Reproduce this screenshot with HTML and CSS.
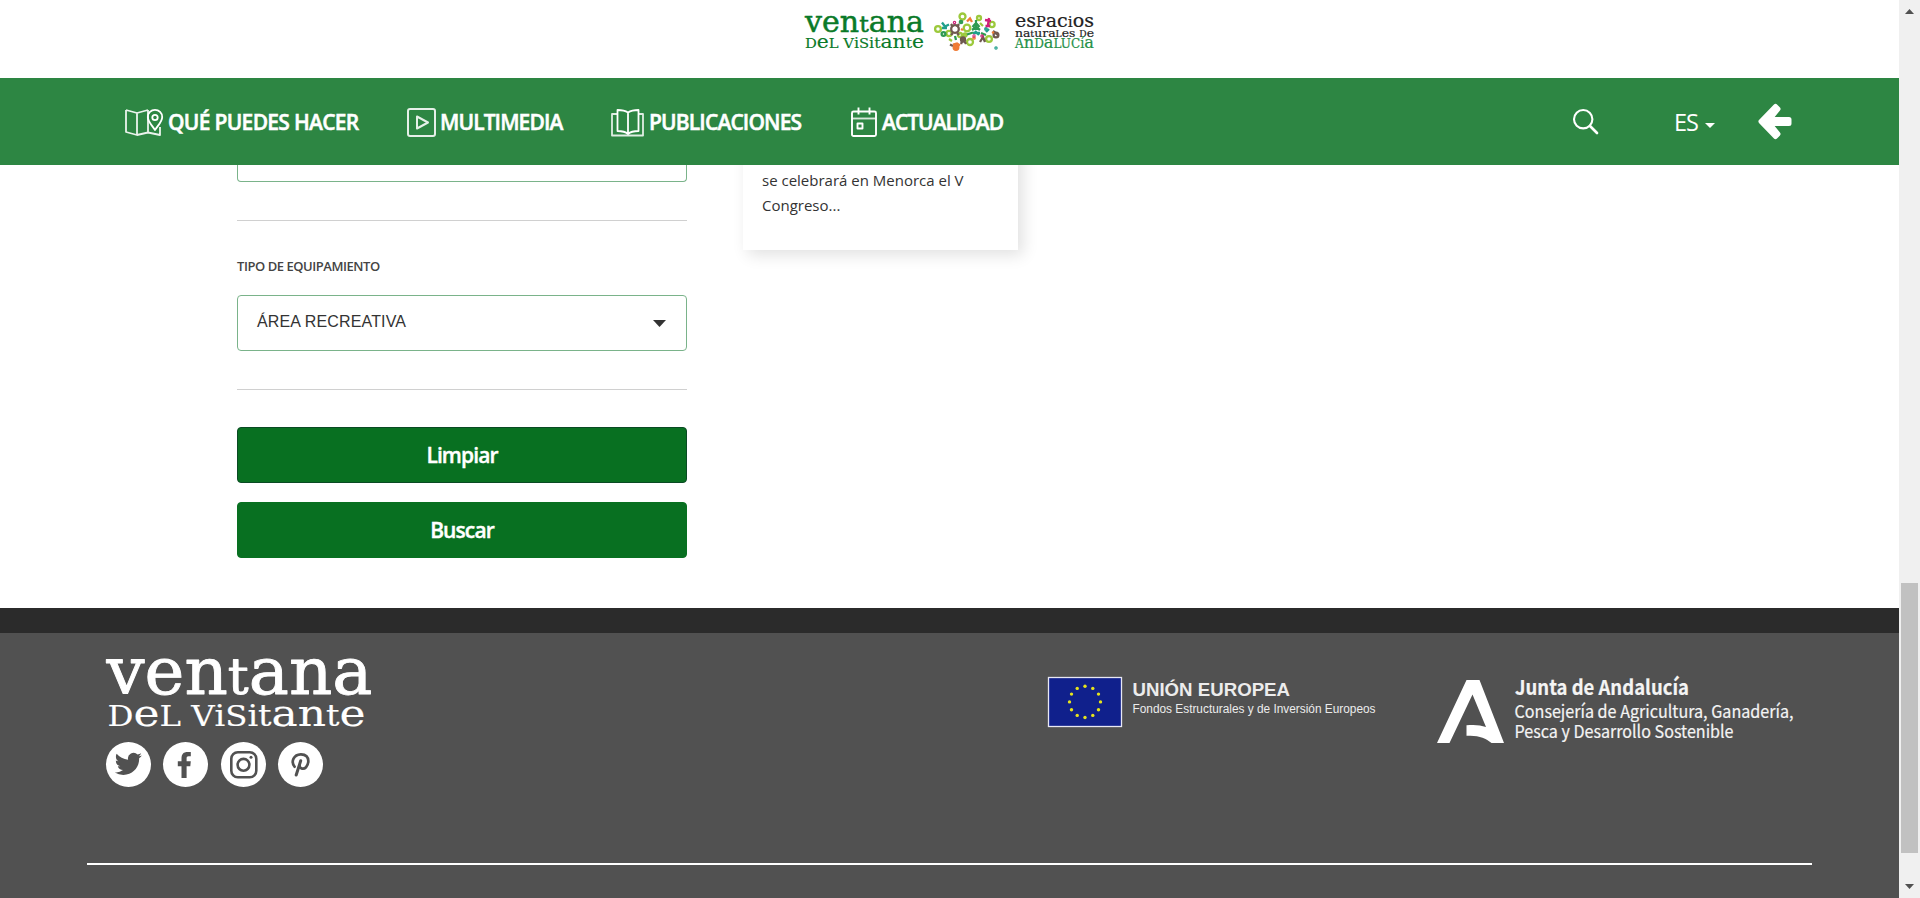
FILE: index.html
```html
<!DOCTYPE html>
<html lang="es">
<head>
<meta charset="utf-8">
<title>Ventana del Visitante</title>
<link rel="stylesheet" href="styles.css">
</head>
<body>
<div class="page">
  <header class="brand">
    <svg class="brand-logo" width="296" height="60" viewBox="800 0 296 60">
      <g class="slab green">
        <text x="805" y="32.3" font-size="29" textLength="119" lengthAdjust="spacingAndGlyphs">ven<tspan font-size="23">t</tspan>ana</text>
        <text class="thin" x="805" y="48" font-size="18.5" textLength="119" lengthAdjust="spacingAndGlyphs"><tspan font-size="13.500">D</tspan>e<tspan font-size="13.500">L V</tspan><tspan font-size="14.500">i</tspan><tspan font-size="13.500">S</tspan><tspan font-size="14.500">it</tspan>an<tspan font-size="14.500">t</tspan>e</text>
      </g>
      <g class="slab black">
        <text x="1015" y="27.3" font-size="18.500" textLength="79" lengthAdjust="spacingAndGlyphs">es<tspan font-size="14">P</tspan>ac<tspan font-size="15">i</tspan>os</text>
        <text x="1015" y="36.6" font-size="11.500" textLength="79" lengthAdjust="spacingAndGlyphs">na<tspan font-size="9">t</tspan>ura<tspan font-size="8.500">L</tspan>es <tspan font-size="8.500">D</tspan>e</text>
      </g>
      <g class="slab leaf">
        <text x="1015" y="48" font-size="13" textLength="79" lengthAdjust="spacingAndGlyphs">A<tspan font-size="17.500">n</tspan>D<tspan font-size="17.500">a</tspan>LUC<tspan font-size="14">í</tspan><tspan font-size="17.500">a</tspan></text>
      </g>
      <g fill="none" stroke-width="2.300" transform="translate(1 0)">
        <g stroke="#9cc93c">
          <circle cx="937" cy="29" r="2.900"/><circle cx="961.500" cy="16.500" r="3"/><circle cx="948" cy="33.500" r="2.600"/><circle cx="966" cy="28" r="3.300"/><circle cx="969" cy="42" r="3"/><circle cx="978" cy="18" r="2"/><circle cx="991" cy="24.500" r="2.600"/><circle cx="988" cy="39" r="2.900"/><circle cx="959" cy="35" r="2"/><circle cx="964" cy="35" r="1.500"/><path d="M948 39l3 2M979 23l3 3"/>
        </g>
        <g stroke="#2f9a52">
          <circle cx="942.500" cy="34" r="1.900"/><path d="M975 20v10M971.500 27l3.500-4 3.500 4M971 30l4-3 4 3"/><path d="M954 36l1 4M966 34.500l6-2M980 33l5 2"/><circle cx="960" cy="22" r="1.200"/>
        </g>
        <g stroke="#6f594f">
          <circle cx="954" cy="29" r="3.800"/><path d="M950 24l2 3M958 24l-2 3M950 35l2-2M958 35l-2-2M960 44l2-5 3 5M979 42l3-5 2 5"/><circle cx="962" cy="39.500" r="2"/><circle cx="995" cy="35" r="2.400"/><path d="M949 44.500l3 1.500M992 31l5 4"/>
        </g>
        <g stroke="#20a08c">
          <path d="M941 22.500l3 4 4-2M941 28h5M972 33h7M974 31l4 4M985 32l3-3"/><circle cx="985" cy="29" r=".8"/><circle cx="995" cy="48" r=".6"/>
        </g>
        <g stroke="#f07b35">
          <path d="M966 21.500l3-3 2 3.500M952 44.500l4-1 3 2M960 29l2 1M991 33l2-1"/><circle cx="955" cy="47.500" r="2.300" fill="#f07b35"/><circle cx="973" cy="38" r=".7"/>
        </g>
        <g stroke="#cf1f79">
          <path d="M984 20l6 1M988 18l-1 7M984.500 26h4.500"/><circle cx="953.500" cy="22.500" r=".6"/><circle cx="981" cy="36" r=".6"/><circle cx="973" cy="36" r=".5"/>
        </g>
      </g>
    </svg>
  </header>

  <nav class="bar">
    <a class="item item-do">
      <svg class="icon" width="43" height="32" viewBox="0 0 43 32" fill="none" stroke="#fff" stroke-width="1.800" stroke-linejoin="round">
        <path d="M1 4l11 3 11-3M1 4v22l11 3 11-2.500 12 2.500V21M12 7v22M23 4v22.500" opacity=".9"/>
        <path d="M30 24c-4-6-7.200-8.500-7.200-13a7.200 7.200 0 0 1 14.400 0c0 4.500-3.200 7-7.200 13z"/><circle cx="30" cy="11.500" r="2.700"/>
      </svg><span>QUÉ PUEDES HACER</span></a>
    <a class="item item-media">
      <svg class="icon" width="33" height="32" viewBox="0 0 33 32" fill="none" stroke="#fff" stroke-width="2" stroke-linejoin="round" opacity=".88">
        <rect x="1" y="3" width="27" height="27" rx="2"/><path d="M10 10.500l11 6-11 6z"/>
      </svg><span>MULTIMEDIA</span></a>
    <a class="item item-pub">
      <svg class="icon" width="38" height="32" viewBox="0 0 38 32" fill="none" stroke="#fff" stroke-width="1.800" stroke-linejoin="round">
        <path d="M17 6.500C14 4.500 10 4 6.500 4v21c4 0 8 .8 10.500 3 2.500-2.200 6.500-3 10.500-3V4C24 4 20 4.500 17 6.500zM17 6.500V28"/><path d="M6 8H1v21.500h31V8h-5" opacity=".85"/>
      </svg><span>PUBLICACIONES</span></a>
    <a class="item item-news">
      <svg class="icon" width="29" height="32" viewBox="0 0 29 32" fill="none" stroke="#fff" stroke-width="1.900" stroke-linejoin="round">
        <rect x="1" y="5.500" width="24" height="24.500" rx="1.500"/><path d="M1 12.500h24" opacity=".8"/><path d="M7.500 1.500v7M18.500 1.500v7"/><rect x="6.500" y="17.500" width="5" height="5"/>
      </svg><span>ACTUALIDAD</span></a>
    <div class="tools">
      <svg class="search" width="26" height="26" viewBox="0 0 26 26" fill="none" stroke="#fff"><circle cx="10.200" cy="10.200" r="9.200" stroke-width="2.100"/><path d="M17 17l7 7" stroke-width="2.700" stroke-linecap="round"/></svg>
      <span class="lang">ES</span>
      <svg class="lang-caret" width="10" height="5" viewBox="0 0 10 5"><path d="M0 0h10L5 5z" fill="#fff"/></svg>
      <svg class="back" width="35" height="37" viewBox="0 0 35 37" fill="#fff" stroke="#fff" stroke-linejoin="round"><path d="M17.500 3.500L3 18.500l14.500 15 2.500-2.500-8.500-10.500h19.500v-4H11.500L20 6z" stroke-width="5"/></svg>
    </div>
  </nav>

  <main class="content">
    <form class="filters">
      <div class="select-end"></div>
      <div class="rule"></div>
      <label class="label">TIPO DE EQUIPAMIENTO</label>
      <div class="select"><span>ÁREA RECREATIVA</span>
        <svg width="13" height="7" viewBox="0 0 13 7"><path d="M0 0h13L6.500 7z" fill="#333"/></svg></div>
      <div class="rule rule-low"></div>
      <button type="button" class="btn btn-clear">Limpiar</button>
      <button type="button" class="btn">Buscar</button>
    </form>
    <article class="card"><p>se celebrará en Menorca el V<br>Congreso...</p></article>
  </main>

  <footer class="footer">
    <div class="footer-row">
      <div class="about">
        <svg class="footer-logo" width="272" height="82" viewBox="104 650 272 82">
          <g class="slab white">
            <text x="106.500" y="694.300" font-size="66" textLength="266" lengthAdjust="spacingAndGlyphs">ven<tspan font-size="51">t</tspan>ana</text>
            <text class="thin" x="107.500" y="725.500" font-size="38" textLength="258" lengthAdjust="spacingAndGlyphs"><tspan font-size="28">D</tspan>e<tspan font-size="28">L V</tspan><tspan font-size="29">i</tspan><tspan font-size="28">S</tspan><tspan font-size="29">it</tspan>an<tspan font-size="29">t</tspan>e</text>
          </g>
        </svg>
        <div class="social">
          <svg width="45" height="45" viewBox="0 0 45 45"><circle cx="22.500" cy="22.500" r="22.500" fill="#fff"/><path transform="translate(8.800 8.300) scale(1.130)" fill="#515151" d="M23.950 4.570a10 10 0 0 1-2.820.770 4.960 4.960 0 0 0 2.160-2.720c-.95.550-2 .950-3.130 1.180a4.920 4.920 0 0 0-8.380 4.480C7.690 8.090 4.070 6.130 1.640 3.160a4.820 4.820 0 0 0-.67 2.480c0 1.710.87 3.210 2.190 4.100a4.900 4.900 0 0 1-2.230-.62v.06a4.920 4.920 0 0 0 3.950 4.830 5 5 0 0 1-2.210.08 4.940 4.940 0 0 0 4.600 3.420A9.870 9.870 0 0 1 0 19.540a14 14 0 0 0 7.560 2.210c9.050 0 14-7.500 14-13.980 0-.21 0-.42-.02-.63a9.940 9.940 0 0 0 2.410-2.570z"/></svg>
          <svg width="45" height="45" viewBox="0 0 45 45"><circle cx="22.500" cy="22.500" r="22.500" fill="#fff"/><path fill="#515151" d="M18.500 36V24.200h-3.700v-5h3.700v-2.700c0-4.500 2.200-6.500 6-6.500h3.300v4.300h-2.200c-1.700 0-2 .8-2 2.100v2.800h4.200l-.5 5h-3.700V36z"/></svg>
          <svg class="insta" width="45" height="45" viewBox="0 0 45 45"><circle cx="22.500" cy="22.500" r="22.500" fill="#fff"/><g fill="none" stroke="#515151" stroke-width="2.600"><rect x="10.300" y="10.300" width="25" height="25" rx="6.500"/><circle cx="22.500" cy="22.800" r="5.900"/></g><circle cx="30" cy="15.300" r="1.500" fill="#515151"/></svg>
          <svg width="45" height="45" viewBox="0 0 45 45"><circle cx="22.500" cy="22.500" r="22.500" fill="#fff"/><g fill="none" stroke="#515151" stroke-width="2.700" stroke-linecap="round" stroke-linejoin="round"><path d="M16.600 24.800c-4.200-5.500-.7-12.300 6.200-12.500 5-.1 7.800 3 7.500 7.300-.4 5-3.600 7.700-6.200 7-2.200-.5-2.700-1.800-2.500-3.200"/><path d="M22.700 18.800l-4.500 14.200" stroke-width="3"/></g></svg>
        </div>
      </div>
      <svg class="eu" width="336" height="60" viewBox="1046 672 336 60">
        <rect x="1048.500" y="677.500" width="73" height="49" fill="#10208c" stroke="#e8e8f4" stroke-width="1.300"/>
        <g fill="#e6e41c">
          <circle cx="1085" cy="686.300" r="1.700"/><circle cx="1092.800" cy="688.400" r="1.700"/><circle cx="1098.500" cy="694.100" r="1.700"/><circle cx="1100.500" cy="701.900" r="1.700"/><circle cx="1098.500" cy="709.700" r="1.700"/><circle cx="1092.800" cy="715.400" r="1.700"/><circle cx="1085" cy="717.500" r="1.700"/><circle cx="1077.200" cy="715.400" r="1.700"/><circle cx="1071.500" cy="709.700" r="1.700"/><circle cx="1069.500" cy="701.900" r="1.700"/><circle cx="1071.500" cy="694.100" r="1.700"/><circle cx="1077.200" cy="688.400" r="1.700"/>
        </g>
        <g class="sans">
          <text x="1132.500" y="696.300" font-size="19" font-weight="700" textLength="157.500" lengthAdjust="spacingAndGlyphs">UNIÓN EUROPEA</text>
          <text x="1132.500" y="712.500" font-size="12.500" textLength="243" lengthAdjust="spacingAndGlyphs">Fondos Estructurales y de Inversión Europeos</text>
        </g>
      </svg>
      <svg class="junta" width="362" height="74" viewBox="1436 674 362 74">
        <path fill="#fff" d="M1466.500 680h13l24.500 63h-12.500c-6-5-13-8-25-7.200v-10.500c8-.9 14-.2 19.500 1.700l-13.500-32.500-23 48.500H1437z"/>
        <g class="source">
          <text x="1515" y="694.500" font-size="20.500" font-weight="700" textLength="174" lengthAdjust="spacingAndGlyphs">Junta de Andalucía</text>
          <text x="1514.500" y="718" font-size="17.500" textLength="279" lengthAdjust="spacingAndGlyphs">Consejería de Agricultura, Ganadería,</text>
          <text x="1514.500" y="738" font-size="17.500" textLength="219" lengthAdjust="spacingAndGlyphs">Pesca y Desarrollo Sostenible</text>
        </g>
      </svg>
    </div>
    <div class="footer-rule"></div>
  </footer>
</div>
<aside class="scroll">
  <svg width="9" height="5" viewBox="0 0 9 5"><path d="M0 5L4.500 0 9 5z" fill="#505050"/></svg>
  <div class="thumb"></div>
  <svg width="9" height="5" viewBox="0 0 9 5"><path d="M0 0h9L4.500 5z" fill="#505050"/></svg>
</aside>
</body>
</html>
```

FILE: styles.css
```css
* { box-sizing: border-box; }
body {
  margin: 0;
  height: 898px;
  display: flex;
  overflow: hidden;
  background: #fff;
  font-family: "Open Sans", sans-serif;
}
svg { display: block; flex: none; overflow: visible; }
.page { width: 1899px; height: 898px; display: flex; flex-direction: column; }

.slab { font-family: "DejaVu Serif", serif; stroke-linejoin: round; }
.sans { font-family: "Liberation Sans", sans-serif; fill: #ececec; }
.source { font-family: "Noto Sans CJK SC", sans-serif; fill: #f4f4f4; stroke: #f4f4f4; stroke-width: .2; }
.green { fill: #0a7a28; stroke: #0a7a28; stroke-width: .5; }
.leaf { fill: #259148; stroke: #259148; stroke-width: .2; }
.black { fill: #222; stroke: #222; stroke-width: .2; }
.white { fill: #fff; stroke: #fff; stroke-width: .9; }
.thin { stroke-width: .15; }

.brand { height: 78px; flex: none; padding-left: 800px; }

.bar {
  position: relative;
  z-index: 1;
  height: 87px;
  flex: none;
  display: flex;
  align-items: center;
  padding-left: 125px;
  background: #2d8643;
  color: #fff;
}
.item {
  display: flex;
  align-items: center;
  font-size: 21px;
  font-weight: 600;
  letter-spacing: -.9px;
  white-space: nowrap;
  -webkit-text-stroke: .5px #fff;
}
.item-do { width: 282px; letter-spacing: -.7px; }
.item-media { width: 204px; }
.item-pub { width: 240px; letter-spacing: -.85px; }
.item-news span { margin-left: 2px; letter-spacing: -1px; }
.tools { display: flex; align-items: center; margin-left: auto; padding-right: 106px; }
.lang { margin-left: 75px; width: 31px; font-size: 23.5px; letter-spacing: -1px; }
.lang-caret { margin-top: 8px; }
.back { margin-left: 43px; }

.content { height: 443px; flex: none; display: flex; align-items: flex-start; gap: 56px; padding-left: 237px; }
.filters { width: 450px; display: flex; flex-direction: column; }
.select-end { height: 17px; border: 1px solid #7ab38a; border-top: 0; border-radius: 0 0 4px 4px; }
.rule { height: 1px; margin-top: 38px; background: #d0d0d0; }
.label { height: 20px; margin: 35px 0 19px; font-size: 13px; line-height: 20px; font-weight: 600; letter-spacing: -.45px; color: #444; }
.select {
  height: 56px;
  display: flex;
  justify-content: space-between;
  align-items: center;
  padding: 0 20px 0 19px;
  border: 1px solid #7ab38a;
  border-radius: 4px;
  font: 16px/20px "Liberation Sans", sans-serif;
  letter-spacing: .14px;
  color: #333;
}
.select span { margin-bottom: 3px; }
.rule-low { margin-bottom: 37px; }
.btn {
  height: 56px;
  margin: 0 0 19px;
  padding: 0;
  border: 1px solid #087021;
  border-radius: 4px;
  background: #087021;
  color: #fff;
  font: 600 21px/54px "Open Sans", sans-serif;
  letter-spacing: -.9px;
  -webkit-text-stroke: .4px #fff;
}
.btn-clear { border-color: #0a4a24; }
.card { width: 275px; height: 125px; margin-top: -40px; padding: 43px 19px 0; box-shadow: 5px 5px 15px rgba(0, 0, 0, .12); }
.card p { margin: 0; font-size: 15px; line-height: 25px; color: #333; white-space: nowrap; }

.footer { flex: 1; border-top: 25px solid #2b2b2b; background: #515151; }
.footer-row { height: 230px; display: flex; align-items: flex-start; padding: 17px 0 0 104px; }
.about { width: 942px; }
.social { display: flex; gap: 12px; padding: 10px 0 0 2px; }
.insta { margin-left: 1px; }
.eu { margin-top: 22px; }
.junta { margin: 24px 0 0 54px; }
.footer-rule { width: 1725px; height: 2px; margin-left: 87px; background: #fff; }

.scroll { width: 21px; height: 898px; display: flex; flex-direction: column; align-items: center; padding: 9px 0; background: #f0f0f0; }
.thumb { width: 17px; height: 270px; margin: 569px 0 31px; background: #c1c1c1; }
```
